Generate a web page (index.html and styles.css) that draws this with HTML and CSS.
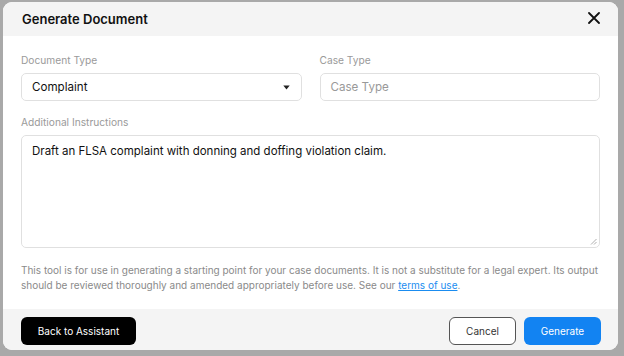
FILE: index.html
```html
<!DOCTYPE html>
<html>
<head>
<meta charset="utf-8">
<link rel="stylesheet" href="styles.css">
</head>
<body>
<div class="backdrop">
  <div class="modal">
    <div class="modal-header">
      <h1 class="title">Generate Document</h1>
      <button class="close" aria-label="Close">
        <svg width="12" height="12" viewBox="0 0 12 12"><path d="M1 1L11 11M11 1L1 11" stroke="#111" stroke-width="1.8" stroke-linecap="round"/></svg>
      </button>
    </div>
    <div class="modal-body">
      <div class="row">
        <div class="field">
          <label class="label">Document Type</label>
          <div class="select">
            <span>Complaint</span>
            <svg width="7" height="5" viewBox="0 0 7 5"><path d="M0.3 0.5H6.7L3.5 4.5Z" fill="#222"/></svg>
          </div>
        </div>
        <div class="field">
          <label class="label">Case Type</label>
          <div class="input placeholder">Case Type</div>
        </div>
      </div>
      <div class="field">
        <label class="label">Additional Instructions</label>
        <div class="textarea">
          Draft an FLSA complaint with donning and doffing violation claim.
          <svg class="grip" width="7" height="7" viewBox="0 0 7 7"><path d="M6.5 1L1 6.5M6.5 4L4 6.5" stroke="#999" stroke-width="0.8"/></svg>
        </div>
      </div>
      <p class="note">This tool is for use in generating a starting point for your case documents. It is not a substitute for a legal expert. Its output should be reviewed thoroughly and amended appropriately before use. See our <a href="#">terms of use</a>.</p>
    </div>
    <div class="modal-footer">
      <button class="btn btn-dark">Back to Assistant</button>
      <div class="actions">
        <button class="btn btn-outline">Cancel</button>
        <button class="btn btn-primary">Generate</button>
      </div>
    </div>
  </div>
</div>
</body>
</html>
```
FILE: styles.css
```css
* { box-sizing: border-box; }
html, body { margin: 0; padding: 0; }
body {
  width: 624px;
  height: 356px;
  background: #a9a9a9;
  font-family: Inter, "Noto Sans", sans-serif;
  overflow: hidden;
}
.backdrop {
  padding: 2px 6px 6px 3px;
}
.modal {
  width: 615px;
  height: 348px;
  background: #fff;
  border-radius: 9px;
  overflow: hidden;
  display: flex;
  flex-direction: column;
}
.modal-header {
  height: 34px;
  background: #f4f4f4;
  display: flex;
  align-items: center;
  justify-content: space-between;
  padding: 0 18px 0 19px;
}
.title {
  margin: 0;
  font-size: 13px;
  font-weight: 600;
  color: #111;
}
.close {
  border: 0;
  background: none;
  padding: 0;
  width: 12px;
  height: 12px;
  display: flex;
  margin-top: -2px;
}
.modal-body {
  flex: 1;
  padding: 17px 18px 0 18px;
}
.row {
  display: flex;
  gap: 18px;
}
.row .field { flex: 1; }
.field { display: flex; flex-direction: column; }
.label {
  font-size: 10.2px;
  color: #9a9a9a;
  line-height: 14px;
  margin-bottom: 6px;
}
.select, .input {
  height: 28px;
  border: 1px solid #e0e0e0;
  border-radius: 5px;
  display: flex;
  align-items: center;
  justify-content: space-between;
  padding: 0 10px;
  font-size: 11.6px;
  color: #111;
  margin-bottom: 14px;
}
.select svg { margin-right: 1px; }
.placeholder { color: #999; }
.textarea {
  position: relative;
  height: 113px;
  border: 1px solid #e0e0e0;
  border-radius: 5px;
  padding: 8px 10px;
  font-size: 11.5px;
  line-height: 14px;
  color: #111;
}
.grip { position: absolute; right: 2px; bottom: 2px; }
.note {
  margin: 15px 0 0 0;
  font-size: 10px;
  line-height: 15px;
  color: #8a8a8a;
}
.note a { color: #1a8cf0; }
.modal-footer {
  height: 41px;
  background: #f4f4f4;
  display: flex;
  align-items: flex-start;
  justify-content: space-between;
  padding: 8px 17px 0 18px;
}
.actions { display: flex; gap: 8px; }
.btn {
  height: 28px;
  border-radius: 6px;
  font-family: Inter, "Noto Sans", sans-serif;
  font-size: 10px;
  padding: 0;
  border: 1px solid transparent;
}
.btn-dark { background: #000; color: #fff; width: 115px; }
.btn-outline { background: #fff; color: #333; border-color: #555; width: 67px; }
.btn-primary { background: #1283f2; color: #fff; width: 77px; }
```
